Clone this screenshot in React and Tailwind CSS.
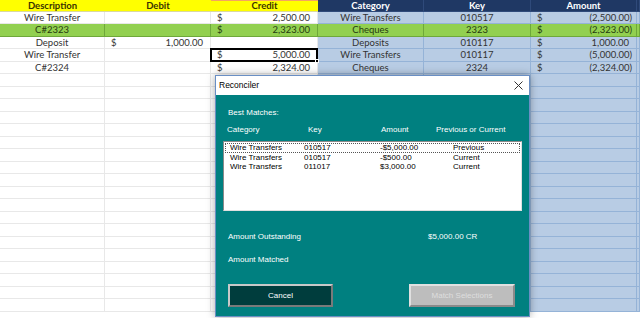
import React from "react";

const rows = [
  { d: "Wire Transfer", debit: "", credit: "2,500.00", cat: "Wire Transfers", key: "010517", amt: "(2,500.00)" },
  { d: "C#2323", debit: "", credit: "2,323.00", cat: "Cheques", key: "2323", amt: "(2,323.00)", green: true },
  { d: "Deposit", debit: "1,000.00", credit: "", cat: "Deposits", key: "010117", amt: "1,000.00" },
  { d: "Wire Transfer", debit: "", credit: "5,000.00", cat: "Wire Transfers", key: "010117", amt: "(5,000.00)", sel: true },
  { d: "C#2324", debit: "", credit: "2,324.00", cat: "Cheques", key: "2324", amt: "(2,324.00)" },
];

const heights = [13, 12, 13, 12, 13, 12, 13, 12, 13, 12, 13, 12, 13, 12, 13, 12, 13, 12, 13, 12, 13, 12, 13, 12, 13];

function Money({ v }) {
  if (!v) return null;
  const p = v.startsWith("(");
  return (
    <div className="flex w-full items-center justify-between pl-[6px] pr-[4px]">
      <span>$</span>
      <span className={p ? "" : "pr-[3px]"}>{v}</span>
    </div>
  );
}

function Sheet() {
  const empty = heights.length - 1 - rows.length;
  const all = [...rows, ...Array.from({ length: empty }, () => null)];
  return (
    <div className="grid grid-cols-[105px_106px_107px_106px_107px_106px_1fr] text-[9.5px] leading-none text-[#333]">
      {["Description", "Debit", "Credit"].map((h, i) => (
        <div
          key={h}
          className={`h-[12px] flex items-center justify-center bg-[#ffff00] font-bold text-[#3a3300] border-b border-[#d9d9a0] ${i === 2 ? "border-t border-t-[#f4a460]" : ""}`}
        >
          {h}
        </div>
      ))}
      {["Category", "Key", "Amount", ""].map((h, i) => (
        <div
          key={i}
          className="h-[12px] flex items-center justify-center bg-[#1f3864] font-bold text-white border-b border-r border-[#2f4a7a]"
        >
          {h}
        </div>
      ))}
      {all.map((r, idx) => {
        const h = heights[idx + 1];
        const g = r && r.green;
        const left = g
          ? "bg-[#92d050] border-b border-r border-[#6ea83a] text-[#263b10]"
          : "bg-white border-b border-r border-[#e8e8e8]";
        const right = g
          ? "bg-[#92d050] border-b border-r border-[#6ea83a] text-[#263b10]"
          : "bg-[#b8cce4] border-b border-r border-[#95b3d7]";
        return (
          <React.Fragment key={idx}>
            <div style={{ height: h }} className={`flex items-center justify-center ${left}`}>{r ? r.d : ""}</div>
            <div style={{ height: h }} className={`flex items-center ${left}`}>{r ? <Money v={r.debit} /> : null}</div>
            <div style={{ height: h }} className={`relative flex items-center ${left}`}>
              {r ? <Money v={r.credit} /> : null}
              {r && r.sel ? (
                <div className="absolute -left-px -top-px -right-px -bottom-px border-2 border-black">
                  <div className="absolute -right-[3px] -bottom-[3px] w-[4px] h-[4px] bg-black border border-white" />
                </div>
              ) : null}
            </div>
            <div style={{ height: h }} className={`flex items-center justify-center ${right}`}>{r ? r.cat : ""}</div>
            <div style={{ height: h }} className={`flex items-center justify-center ${right}`}>{r ? r.key : ""}</div>
            <div style={{ height: h }} className={`flex items-center ${right}`}>{r ? <Money v={r.amt} /> : null}</div>
            <div style={{ height: h }} className={`${right}`} />
          </React.Fragment>
        );
      })}
    </div>
  );
}

const listRows = [
  ["Wire Transfers", "010517", "-$5,000.00", "Previous"],
  ["Wire Transfers", "010517", "-$500.00", "Current"],
  ["Wire Transfers", "011017", "$3,000.00", "Current"],
];

function Dialog() {
  return (
    <div className="absolute left-[215px] top-[75px] w-[315px] h-[242px] flex flex-col border border-[#6a8fc4] shadow-[0_0_8px_rgba(0,0,0,0.35)] font-['Liberation_Sans',sans-serif] text-[8px] leading-none">
      <div className="h-[19px] bg-white flex items-center justify-between pl-[3px] pr-[6px] text-black">
        <span className="text-[8.5px]">Reconciler</span>
        <svg width="9" height="9" viewBox="0 0 9 9" className="text-[#333]">
          <path d="M0.5 0.5 L8.5 8.5 M8.5 0.5 L0.5 8.5" stroke="currentColor" strokeWidth="1" />
        </svg>
      </div>
      <div className="flex-1 bg-[#008080] text-white flex flex-col px-[7px]">
        <div className="pl-[5px] mt-[14px] h-[9px]">Best Matches:</div>
        <div className="mt-[8px] h-[9px] grid grid-cols-[81px_73px_55px_1fr] pl-[4px]">
          <span>Category</span>
          <span>Key</span>
          <span>Amount</span>
          <span>Previous or Current</span>
        </div>
        <div className="mt-[6px] h-[70px] bg-white border border-t-[#8a8a8a] border-l-[#8a8a8a] border-b-[#e0e0e0] border-r-[#e0e0e0] pt-px px-px text-black">
          {listRows.map((r, i) => (
            <div
              key={i}
              className={`h-[9.5px] grid grid-cols-[74px_76px_73px_1fr] pl-[4px] items-center ${i === 0 ? "border border-dotted border-[#555]" : "border border-transparent"}`}
            >
              <span>{r[0]}</span>
              <span>{r[1]}</span>
              <span>{r[2]}</span>
              <span>{r[3]}</span>
            </div>
          ))}
        </div>
        <div className="mt-[22px] h-[9px] flex pl-[5px]">
          <span className="w-[200px]">Amount Outstanding</span>
          <span>$5,000.00 CR</span>
        </div>
        <div className="mt-[14px] h-[9px] pl-[5px]">Amount Matched</div>
        <div className="mt-[19px] flex justify-between pl-[5px] pr-[7px]">
          <div className="w-[105px] h-[23px] bg-[#003d3d] border-2 border-t-[#c8c8c8] border-l-[#c8c8c8] border-b-[#7a7a7a] border-r-[#7a7a7a] flex items-center justify-center text-white">
            Cancel
          </div>
          <div className="w-[106px] h-[23px] bg-[#bdbdbd] border-2 border-t-[#e0e0e0] border-l-[#e0e0e0] border-b-[#8a8a8a] border-r-[#8a8a8a] flex items-center justify-center text-[#dedede]">
            Match Selections
          </div>
        </div>
      </div>
    </div>
  );
}

export default function App() {
  return (
    <div className="relative w-[640px] h-[318px] overflow-hidden bg-white font-['Lato',sans-serif]">
      <Sheet />
      <Dialog />
    </div>
  );
}
